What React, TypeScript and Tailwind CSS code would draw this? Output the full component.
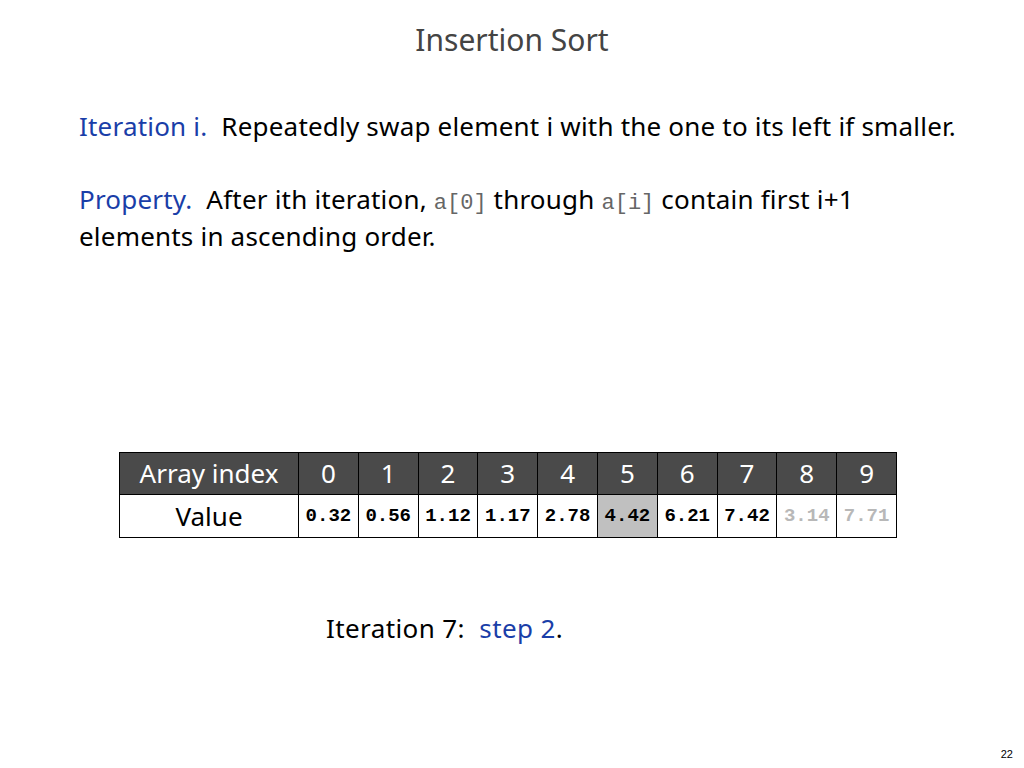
import React from "react";

const values: { v: string; cls: string }[] = [
  { v: "0.32", cls: "" },
  { v: "0.56", cls: "" },
  { v: "1.12", cls: "" },
  { v: "1.17", cls: "" },
  { v: "2.78", cls: "" },
  { v: "4.42", cls: "bg-[#c0c0c0]" },
  { v: "6.21", cls: "" },
  { v: "7.42", cls: "" },
  { v: "3.14", cls: "text-[#b8b8b8]" },
  { v: "7.71", cls: "text-[#b8b8b8]" },
];

const sans = { fontFamily: '"Noto Sans", sans-serif' };
const mono = { fontFamily: '"Liberation Mono", monospace' };

export default function App() {
  return (
    <div
      className="relative w-[1024px] h-[768px] bg-white text-black overflow-hidden"
      style={sans}
    >
      <div className="pt-[20px] text-center text-[30px] leading-[40px] text-[#444444]">
        Insertion Sort
      </div>
      <div className="pl-[79px] pr-[20px] mt-[48px] text-[26px] leading-[37px] tracking-[0.2px]">
        <p className="whitespace-nowrap">
          <span className="text-[#1a3ea8]">Iteration i.</span>
          &nbsp; Repeatedly swap element i with the one to its left if smaller.
        </p>
        <p className="mt-[36px]">
          <span className="text-[#1a3ea8]">Property.</span>
          &nbsp; After ith iteration,{" "}
          <span className="text-[22px] leading-none tracking-normal text-[#666666]" style={mono}>
            a[0]
          </span>{" "}
          through{" "}
          <span className="text-[22px] leading-none tracking-normal text-[#666666]" style={mono}>
            a[i]
          </span>{" "}
          contain first i+1
          <br />
          elements in ascending order.
        </p>
      </div>

      <div className="ml-[119px] mt-[197px] w-[778px] border border-black">
        <div className="flex h-[42px] bg-[#4a4a4a] text-white text-[26px] border-b border-black">
          <div className="w-[179px] flex items-center justify-center border-r border-black">
            Array index
          </div>
          {Array.from({ length: 10 }).map((_, i) => (
            <div
              key={i}
              className={`flex-1 flex items-center justify-center ${i < 9 ? "border-r border-black" : ""}`}
            >
              {i}
            </div>
          ))}
        </div>
        <div className="flex h-[42px] text-[26px]">
          <div className="w-[179px] flex items-center justify-center border-r border-black">
            Value
          </div>
          {values.map((c, i) => (
            <div
              key={i}
              className={`flex-1 flex items-center justify-center font-bold text-[19px] ${c.cls} ${i < 9 ? "border-r border-black" : ""}`}
              style={mono}
            >
              {c.v}
            </div>
          ))}
        </div>
      </div>

      <div className="ml-[326px] mt-[72px] text-[26px] leading-[37px] tracking-[0.4px]">
        Iteration 7:&nbsp; <span className="text-[#1a3ea8]">step 2</span>.
      </div>

      <div className="absolute right-[11px] bottom-[6px] text-[11px]" style={{ fontFamily: '"Liberation Sans", sans-serif' }}>
        22
      </div>
    </div>
  );
}
